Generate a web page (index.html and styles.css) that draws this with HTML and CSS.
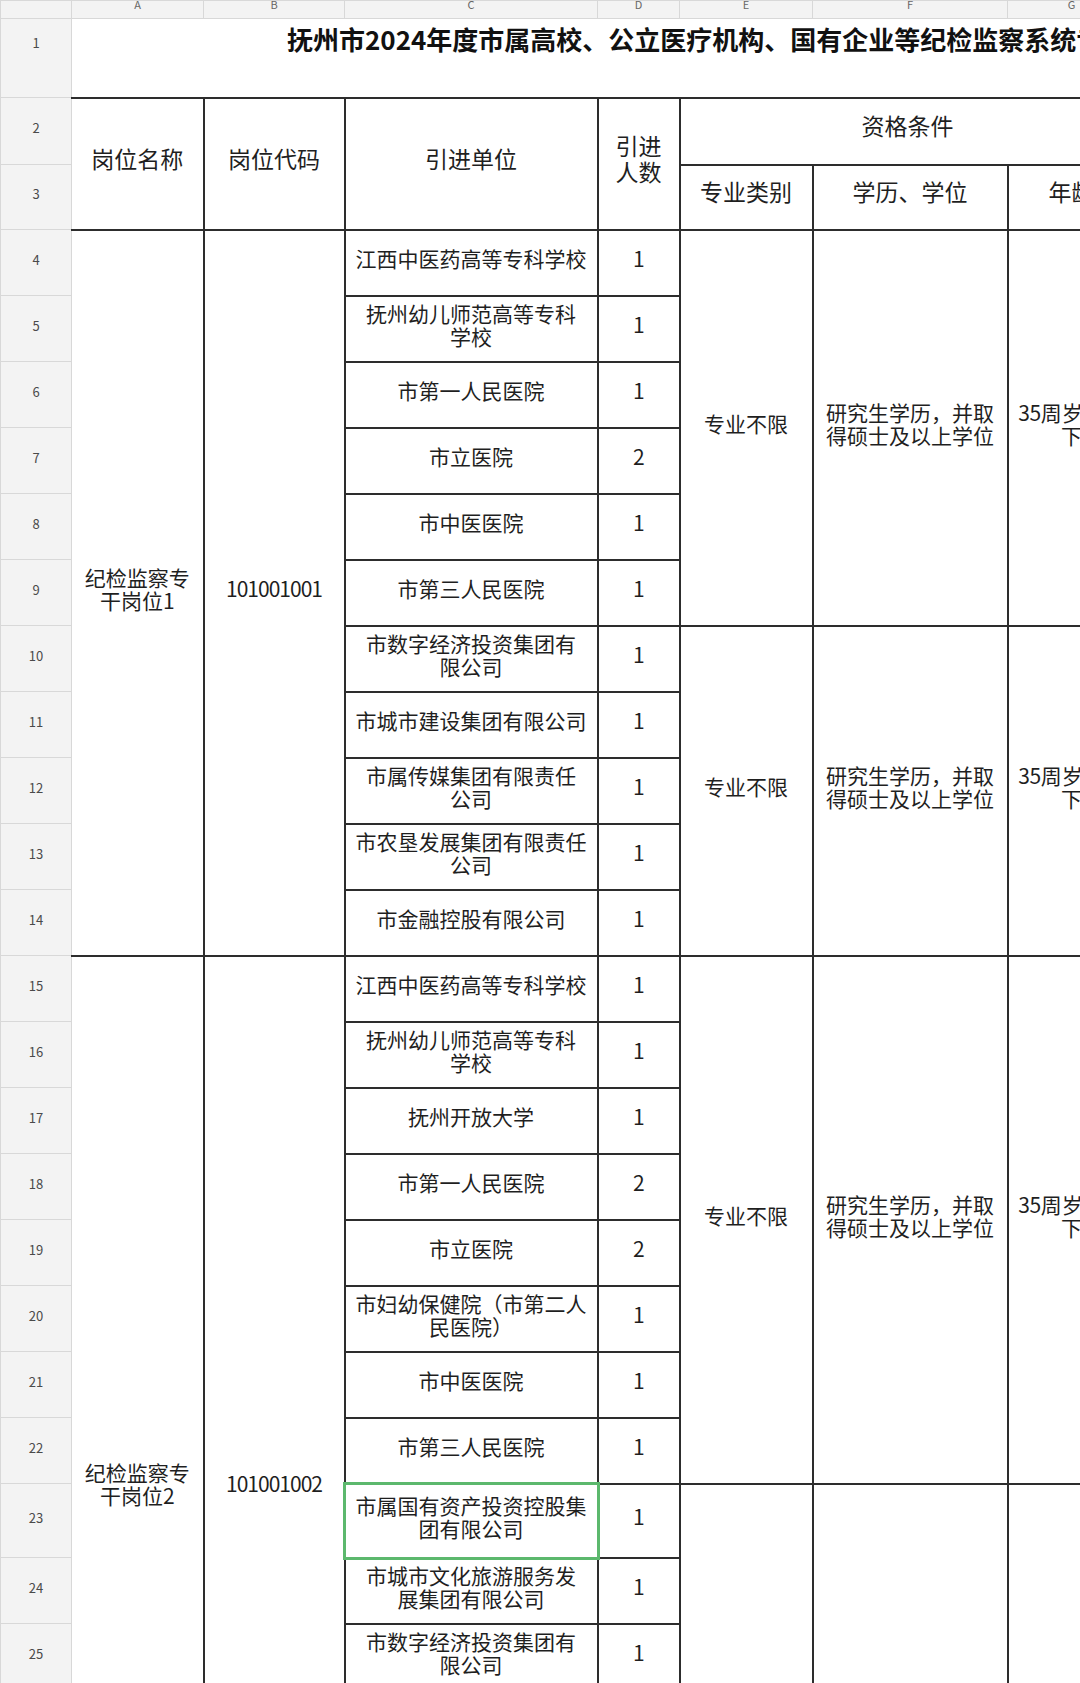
FILE: index.html
```html
<!DOCTYPE html>
<html lang="zh-CN">
<head>
<meta charset="utf-8">
<title>抚州市2024年度纪检监察系统岗位表</title>
<link rel="stylesheet" href="styles.css">
</head>
<body>
<table class="sheet">
  <colgroup>
    <col class="w-rh"><col class="w-a"><col class="w-b"><col class="w-c"><col class="w-d"><col class="w-e"><col class="w-f"><col class="w-g"><col class="w-h">
  </colgroup>
  <tr class="h-ch">
    <th class="ch corner"></th><th class="ch">A</th><th class="ch">B</th><th class="ch">C</th><th class="ch">D</th><th class="ch">E</th><th class="ch">F</th><th class="ch">G</th><th class="ch">H</th>
  </tr>
  <tr class="h-r1">
    <th class="rh rh-top">1</th>
    <td class="title" colspan="8">抚州市2024年度市属高校、公立医疗机构、国有企业等纪检监察系统专干岗位公开引进人才岗位表</td>
  </tr>
  <tr class="h-r2">
    <th class="rh">2</th>
    <td class="hd ca" rowspan="2">岗位名称</td>
    <td class="hd" rowspan="2">岗位代码</td>
    <td class="hd" rowspan="2">引进单位</td>
    <td class="hd two" rowspan="2">引进<br>人数</td>
    <td class="hd" colspan="3">资格条件</td>
    <td class="hd" rowspan="2">其他条件</td>
  </tr>
  <tr class="h-r3">
    <th class="rh">3</th>
    <td class="hd">专业类别</td>
    <td class="hd">学历、学位</td>
    <td class="hd">年龄</td>
  </tr>

  <tr class="h-row">
    <th class="rh">4</th>
    <td class="ca" rowspan="11">纪检监察专<br>干岗位1</td>
    <td class="code" rowspan="11">101001001</td>
    <td>江西中医药高等专科学校</td><td class="num">1</td>
    <td rowspan="6">专业不限</td>
    <td rowspan="6">研究生学历，并取<br>得硕士及以上学位</td>
    <td rowspan="6"><span class="num">35</span>周岁及以<br>下</td>
    <td rowspan="6"></td>
  </tr>
  <tr class="h-row"><th class="rh">5</th><td>抚州幼儿师范高等专科<br>学校</td><td class="num">1</td></tr>
  <tr class="h-row"><th class="rh">6</th><td>市第一人民医院</td><td class="num">1</td></tr>
  <tr class="h-row"><th class="rh">7</th><td>市立医院</td><td class="num">2</td></tr>
  <tr class="h-row"><th class="rh">8</th><td>市中医医院</td><td class="num">1</td></tr>
  <tr class="h-row"><th class="rh">9</th><td>市第三人民医院</td><td class="num">1</td></tr>
  <tr class="h-row">
    <th class="rh">10</th>
    <td>市数字经济投资集团有<br>限公司</td><td class="num">1</td>
    <td rowspan="5">专业不限</td>
    <td rowspan="5">研究生学历，并取<br>得硕士及以上学位</td>
    <td rowspan="5"><span class="num">35</span>周岁及以<br>下</td>
    <td rowspan="5"></td>
  </tr>
  <tr class="h-row"><th class="rh">11</th><td>市城市建设集团有限公司</td><td class="num">1</td></tr>
  <tr class="h-row"><th class="rh">12</th><td>市属传媒集团有限责任<br>公司</td><td class="num">1</td></tr>
  <tr class="h-row"><th class="rh">13</th><td>市农垦发展集团有限责任<br>公司</td><td class="num">1</td></tr>
  <tr class="h-row"><th class="rh">14</th><td>市金融控股有限公司</td><td class="num">1</td></tr>

  <tr class="h-row">
    <th class="rh">15</th>
    <td class="ca" rowspan="16">纪检监察专<br>干岗位2</td>
    <td class="code" rowspan="16">101001002</td>
    <td>江西中医药高等专科学校</td><td class="num">1</td>
    <td rowspan="8">专业不限</td>
    <td rowspan="8">研究生学历，并取<br>得硕士及以上学位</td>
    <td rowspan="8"><span class="num">35</span>周岁及以<br>下</td>
    <td rowspan="8"></td>
  </tr>
  <tr class="h-row"><th class="rh">16</th><td>抚州幼儿师范高等专科<br>学校</td><td class="num">1</td></tr>
  <tr class="h-row"><th class="rh">17</th><td>抚州开放大学</td><td class="num">1</td></tr>
  <tr class="h-row"><th class="rh">18</th><td>市第一人民医院</td><td class="num">2</td></tr>
  <tr class="h-row"><th class="rh">19</th><td>市立医院</td><td class="num">2</td></tr>
  <tr class="h-row"><th class="rh">20</th><td>市妇幼保健院（市第二人<br>民医院）</td><td class="num">1</td></tr>
  <tr class="h-row"><th class="rh">21</th><td>市中医医院</td><td class="num">1</td></tr>
  <tr class="h-row"><th class="rh">22</th><td>市第三人民医院</td><td class="num">1</td></tr>
  <tr class="h-tall">
    <th class="rh">23</th>
    <td class="sel">市属国有资产投资控股集<br>团有限公司</td><td class="num">1</td>
    <td rowspan="8">专业不限</td>
    <td rowspan="8">研究生学历，并取<br>得硕士及以上学位</td>
    <td rowspan="8"><span class="num">35</span>周岁及以<br>下</td>
    <td rowspan="8"></td>
  </tr>
  <tr class="h-row"><th class="rh">24</th><td>市城市文化旅游服务发<br>展集团有限公司</td><td class="num">1</td></tr>
  <tr class="h-row"><th class="rh">25</th><td>市数字经济投资集团有<br>限公司</td><td class="num">1</td></tr>
  <tr class="h-row"><th class="rh">26</th><td>市城市建设集团有限公司</td><td class="num">1</td></tr>
  <tr class="h-row"><th class="rh">27</th><td>市属传媒集团有限责任<br>公司</td><td class="num">1</td></tr>
  <tr class="h-row"><th class="rh">28</th><td>市农垦发展集团有限责任<br>公司</td><td class="num">1</td></tr>
  <tr class="h-row"><th class="rh">29</th><td>市金融控股有限公司</td><td class="num">1</td></tr>
  <tr class="h-row"><th class="rh">30</th><td>市城市文化旅游服务发<br>展集团有限公司</td><td class="num">1</td></tr>
</table>
</body>
</html>
```

FILE: styles.css
```css
html, body {
  margin: 0;
  padding: 0;
  background: #ffffff;
}

body {
  width: 1080px;
  height: 1683px;
  overflow: hidden;
  font-family: "Noto Sans CJK SC", "Noto Sans", sans-serif;
  color: #1f1f1f;
}

.sheet {
  border-collapse: collapse;
  table-layout: fixed;
  width: 1335px;
}

.w-rh { width: 71px; }
.w-a { width: 132px; }
.w-b { width: 141px; }
.w-c { width: 253px; }
.w-d { width: 82px; }
.w-e { width: 133px; }
.w-f { width: 195px; }
.w-g { width: 128px; }
.w-h { width: 200px; }

.h-ch { height: 18px; }
.h-r1 { height: 79px; }
.h-r2 { height: 67px; }
.h-r3 { height: 65px; }
.h-row { height: 66px; }
.h-tall { height: 74px; }

.sheet td {
  border: 2px solid #2d2d2d;
  padding: 0 0 8px 0;
  text-align: center;
  vertical-align: middle;
  font-size: 21px;
  line-height: 23px;
  white-space: nowrap;
  overflow: hidden;
  color: #1f1f1f;
}

.sheet .ca {
  border-left: none;
}

.ch {
  background: #f3f3f3;
  border: 1px solid #d8d8d8;
  padding: 0;
  font-size: 11px;
  line-height: 7px;
  font-weight: normal;
  color: #666666;
  vertical-align: top;
  overflow: hidden;
}

.rh {
  background: #f3f3f3;
  border: 1px solid #d8d8d8;
  padding: 0 0 7px 0;
  font-size: 13px;
  font-weight: normal;
  color: #4a4a4a;
  text-align: center;
  vertical-align: middle;
}

.rh-top {
  vertical-align: top;
  padding: 14px 0 0 0;
  line-height: 20px;
}

.sheet .title {
  border: none;
  text-align: left;
  vertical-align: top;
  padding: 3px 0 0 215px;
  font-size: 26px;
  line-height: 34px;
  font-weight: bold;
  color: #111111;
}

.sheet .hd {
  font-size: 23px;
  line-height: 26px;
  padding-bottom: 12px;
}

.sheet .code {
  letter-spacing: -1px;
}

.num {
  letter-spacing: -0.5px;
}

.sheet .sel {
  position: relative;
  overflow: visible;
}

.sel::after {
  content: "";
  position: absolute;
  left: -3px;
  right: -3px;
  top: -3px;
  bottom: -3px;
  border: 3px solid #5cb86d;
  pointer-events: none;
}
```
